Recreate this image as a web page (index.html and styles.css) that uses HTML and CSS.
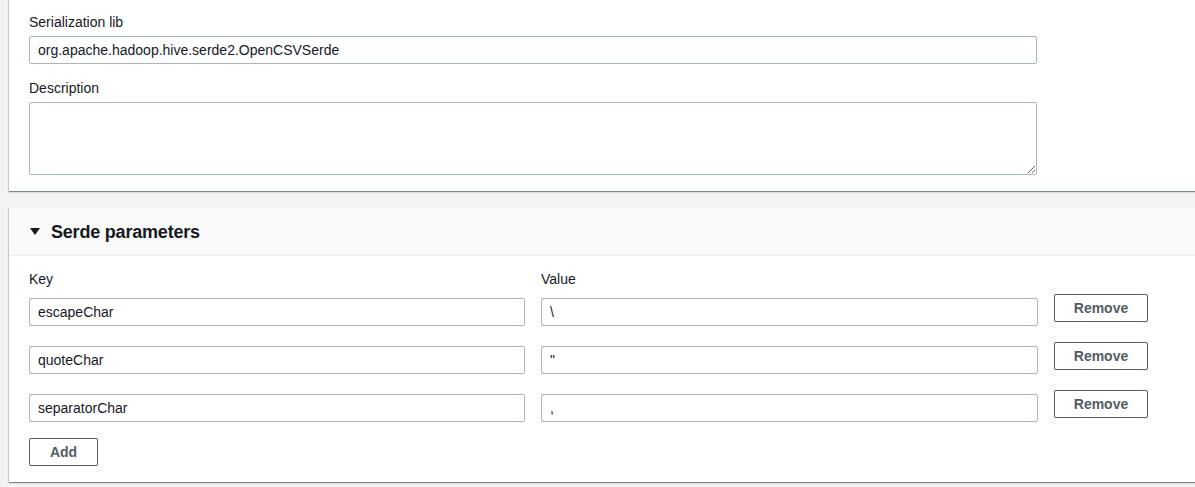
FILE: index.html
```html
<!DOCTYPE html>
<html>
<head>
<meta charset="utf-8">
<link rel="stylesheet" href="styles.css">
</head>
<body>
<div class="page">
  <section class="card card-first">
    <div class="card-body">
      <div class="field">
        <label class="label">Serialization lib</label>
        <input class="input" type="text" value="org.apache.hadoop.hive.serde2.OpenCSVSerde">
      </div>
      <div class="field">
        <label class="label">Description</label>
        <textarea class="input textarea"></textarea>
      </div>
    </div>
  </section>

  <section class="card">
    <div class="card-header">
      <span class="caret"></span>
      <h2 class="title">Serde parameters</h2>
    </div>
    <div class="card-body params">
      <div class="row head">
        <div class="label">Key</div>
        <div class="label">Value</div>
        <div></div>
      </div>
      <div class="row">
        <input class="input" type="text" value="escapeChar">
        <input class="input" type="text" value="\">
        <button class="btn btn-remove">Remove</button>
      </div>
      <div class="row">
        <input class="input" type="text" value="quoteChar">
        <input class="input" type="text" value="&quot;">
        <button class="btn btn-remove">Remove</button>
      </div>
      <div class="row">
        <input class="input" type="text" value="separatorChar">
        <input class="input" type="text" value=",">
        <button class="btn btn-remove">Remove</button>
      </div>
      <div class="add-row">
        <button class="btn btn-add">Add</button>
      </div>
    </div>
  </section>
</div>
</body>
</html>
```

FILE: styles.css
```css
html, body {
  margin: 0;
  padding: 0;
  background: #f2f3f3;
  overflow: hidden;
  font-family: "Liberation Sans", Arial, sans-serif;
  font-size: 14px;
  color: #16191f;
}

.page {
  padding-left: 9px;
  width: 1220px;
}

.card {
  background: #fff;
  box-shadow: 0 1px 1px 0 rgba(0, 28, 36, 0.3), 1px 1px 1px 0 rgba(0, 28, 36, 0.15), -1px 1px 1px 0 rgba(0, 28, 36, 0.15);
  margin-bottom: 17px;
}

.card-first {
  margin-top: -20px;
}

.card-first .card-body {
  padding: 31px 20px 16px 20px;
  width: 1008px;
}

.field {
  display: flex;
  flex-direction: column;
}

.field + .field {
  margin-top: 13px;
}

.label {
  display: block;
  line-height: 22px;
  margin-bottom: 3px;
}

.input {
  box-sizing: border-box;
  height: 28px;
  border: 1px solid #aab7b8;
  border-radius: 2px;
  padding: 0 8px;
  font: inherit;
  color: #16191f;
  background: #fff;
  outline: none;
}

.textarea {
  height: 73px;
  resize: vertical;
  padding: 4px 8px;
}

.card-header {
  height: 47px;
  background: #fafafa;
  border-bottom: 1px solid #eaeded;
  display: flex;
  align-items: center;
  padding-left: 21px;
}

.caret {
  width: 0;
  height: 0;
  border-left: 5px solid transparent;
  border-right: 5px solid transparent;
  border-top: 7px solid #16191f;
  margin-right: 11px;
}

.title {
  margin: 0;
  font-size: 18px;
  font-weight: 700;
  line-height: 22px;
  letter-spacing: -0.2px;
}

.params {
  padding: 12px 20px 16px 20px;
}

.row {
  display: grid;
  grid-template-columns: 496px 497px 94px;
  column-gap: 16px;
  align-items: center;
  margin-bottom: 20px;
}

.row .btn-remove {
  width: 94px;
  margin-top: -8px;
}

.row.head {
  margin-bottom: 8px;
}

.row.head .label {
  margin: 0;
}

.btn {
  box-sizing: border-box;
  height: 28px;
  border: 1px solid #545b64;
  border-radius: 2px;
  background: #fff;
  color: #545b64;
  font: inherit;
  font-weight: 700;
  font-size: 14px;
  padding: 0;
  cursor: pointer;
}

.btn-add {
  width: 69px;
}

.add-row {
  margin-top: -4px;
}
```
